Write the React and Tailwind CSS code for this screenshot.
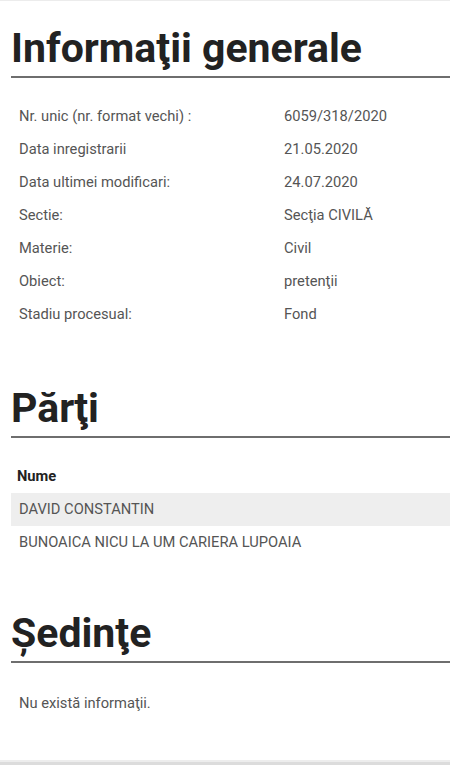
import React from "react";

const info = [
  ["Nr. unic (nr. format vechi) :", "6059/318/2020"],
  ["Data inregistrarii", "21.05.2020"],
  ["Data ultimei modificari:", "24.07.2020"],
  ["Sectie:", "Secţia CIVILĂ"],
  ["Materie:", "Civil"],
  ["Obiect:", "pretenţii"],
  ["Stadiu procesual:", "Fond"],
];

function Heading({ children, className = "" }) {
  return (
    <h2
      className={
        "text-[41px] leading-[48px] font-bold text-[#222222] pb-[4px] border-b-2 border-[#6e6e6e] " +
        className
      }
    >
      {children}
    </h2>
  );
}

export default function App() {
  return (
    <div
      className="w-[450px] h-[765px] flex flex-col bg-white border-t border-[#ececec]"
      style={{ fontFamily: "Roboto, 'Noto Sans', sans-serif" }}
    >
      <div className="flex-1 pl-[11px]">
        <Heading className="mt-[23px]">Informaţii generale</Heading>
        <div className="mt-[22px] text-[14.7px] text-[#555555]">
          {info.map(([k, v]) => (
            <div key={k} className="grid grid-cols-[273px_1fr] h-[33px] items-center">
              <div className="pl-[8px]">{k}</div>
              <div>{v}</div>
            </div>
          ))}
        </div>

        <Heading className="mt-[53px]">Părţi</Heading>
        <div className="mt-[22px] text-[14.7px]">
          <div className="h-[33px] flex items-center pl-[6px] font-bold text-[#222222]">Nume</div>
          <div className="h-[33px] flex items-center pl-[8px] bg-[#eeeeee] text-[#555555]">
            DAVID CONSTANTIN
          </div>
          <div className="h-[33px] flex items-center pl-[8px] text-[#555555]">
            BUNOAICA NICU LA UM CARIERA LUPOAIA
          </div>
        </div>

        <Heading className="mt-[50px]">Ședinţe</Heading>
        <div className="mt-[24px] h-[33px] flex items-center pl-[8px] text-[14.7px] text-[#555555]">
          Nu există informaţii.
        </div>
      </div>
      <div className="h-[2px] bg-[#ededed]" />
      <div className="h-[3px] bg-[#dcdcdc]" />
    </div>
  );
}
